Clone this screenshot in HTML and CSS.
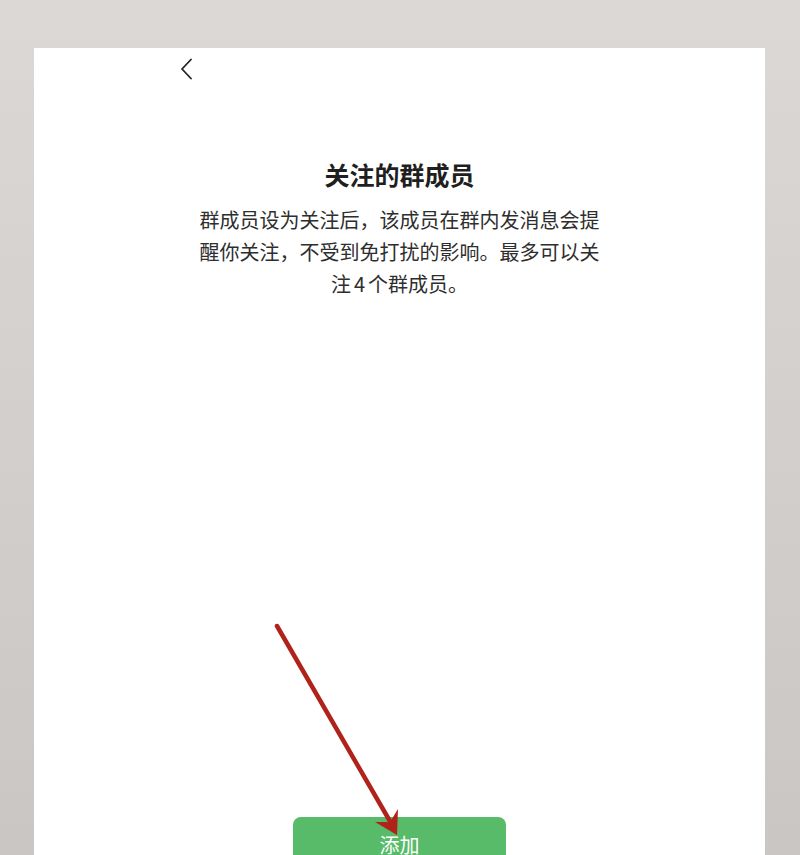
FILE: index.html
```html
<!DOCTYPE html>
<html lang="zh-CN">
<head>
<meta charset="utf-8">
<title>关注的群成员</title>
<link rel="stylesheet" href="styles.css">
</head>
<body>
<div class="panel">
  <div class="nav">
    <svg class="back" width="14" height="22" viewBox="0 0 14 22"><path d="M11 1.5 L2 11 L11 20.5" fill="none" stroke="#222" stroke-width="1.8" stroke-linecap="round" stroke-linejoin="round"/></svg>
  </div>
  <h1 class="title">关注的群成员</h1>
  <p class="desc">群成员设为关注后，该成员在群内发消息会提醒你关注，不受到免打扰的影响。最多可以关注<span class="num">4</span>个群成员。</p>
  <div class="btn">添加</div>
</div>
<svg class="arrow" width="800" height="855" viewBox="0 0 800 855">
  <line x1="277" y1="626" x2="391" y2="823" stroke="#b0231b" stroke-width="4.5" stroke-linecap="round"/>
  <polygon points="397,835 375,822 390,822 398,809" fill="#b0231b"/>
</svg>
</body>
</html>
```
FILE: styles.css
```css
html, body {
  margin: 0;
  padding: 0;
  height: 855px;
  overflow: hidden;
}
body {
  position: relative;
  background: linear-gradient(#dbd8d5, #c9c6c3);
  font-family: "Noto Sans CJK SC", "Noto Sans", sans-serif;
}
.panel {
  margin: 48px 0 0 34px;
  width: 731px;
  height: 807px;
  background: #fff;
  display: flex;
  flex-direction: column;
  align-items: center;
  overflow: hidden;
}
.nav {
  align-self: stretch;
  padding: 10px 0 0 146px;
  height: 22px;
}
.back {
  display: block;
}
.title {
  margin: 77px 0 0;
  font-size: 25px;
  line-height: 35px;
  font-weight: 600;
  color: #1f1f1f;
  text-align: center;
}
.desc {
  margin: 12px 0 0;
  width: 404px;
  font-size: 20px;
  line-height: 32px;
  color: #2e2e2e;
  text-align: center;
}
.num {
  margin: 0 3px;
}
.btn {
  flex-shrink: 0;
  margin-top: 517px;
  width: 213px;
  height: 56px;
  line-height: 56px;
  border-radius: 8px;
  background: #58bb6a;
  color: #fff;
  font-size: 20px;
  text-align: center;
}
.arrow {
  position: absolute;
  left: 0;
  top: 0;
}
```
